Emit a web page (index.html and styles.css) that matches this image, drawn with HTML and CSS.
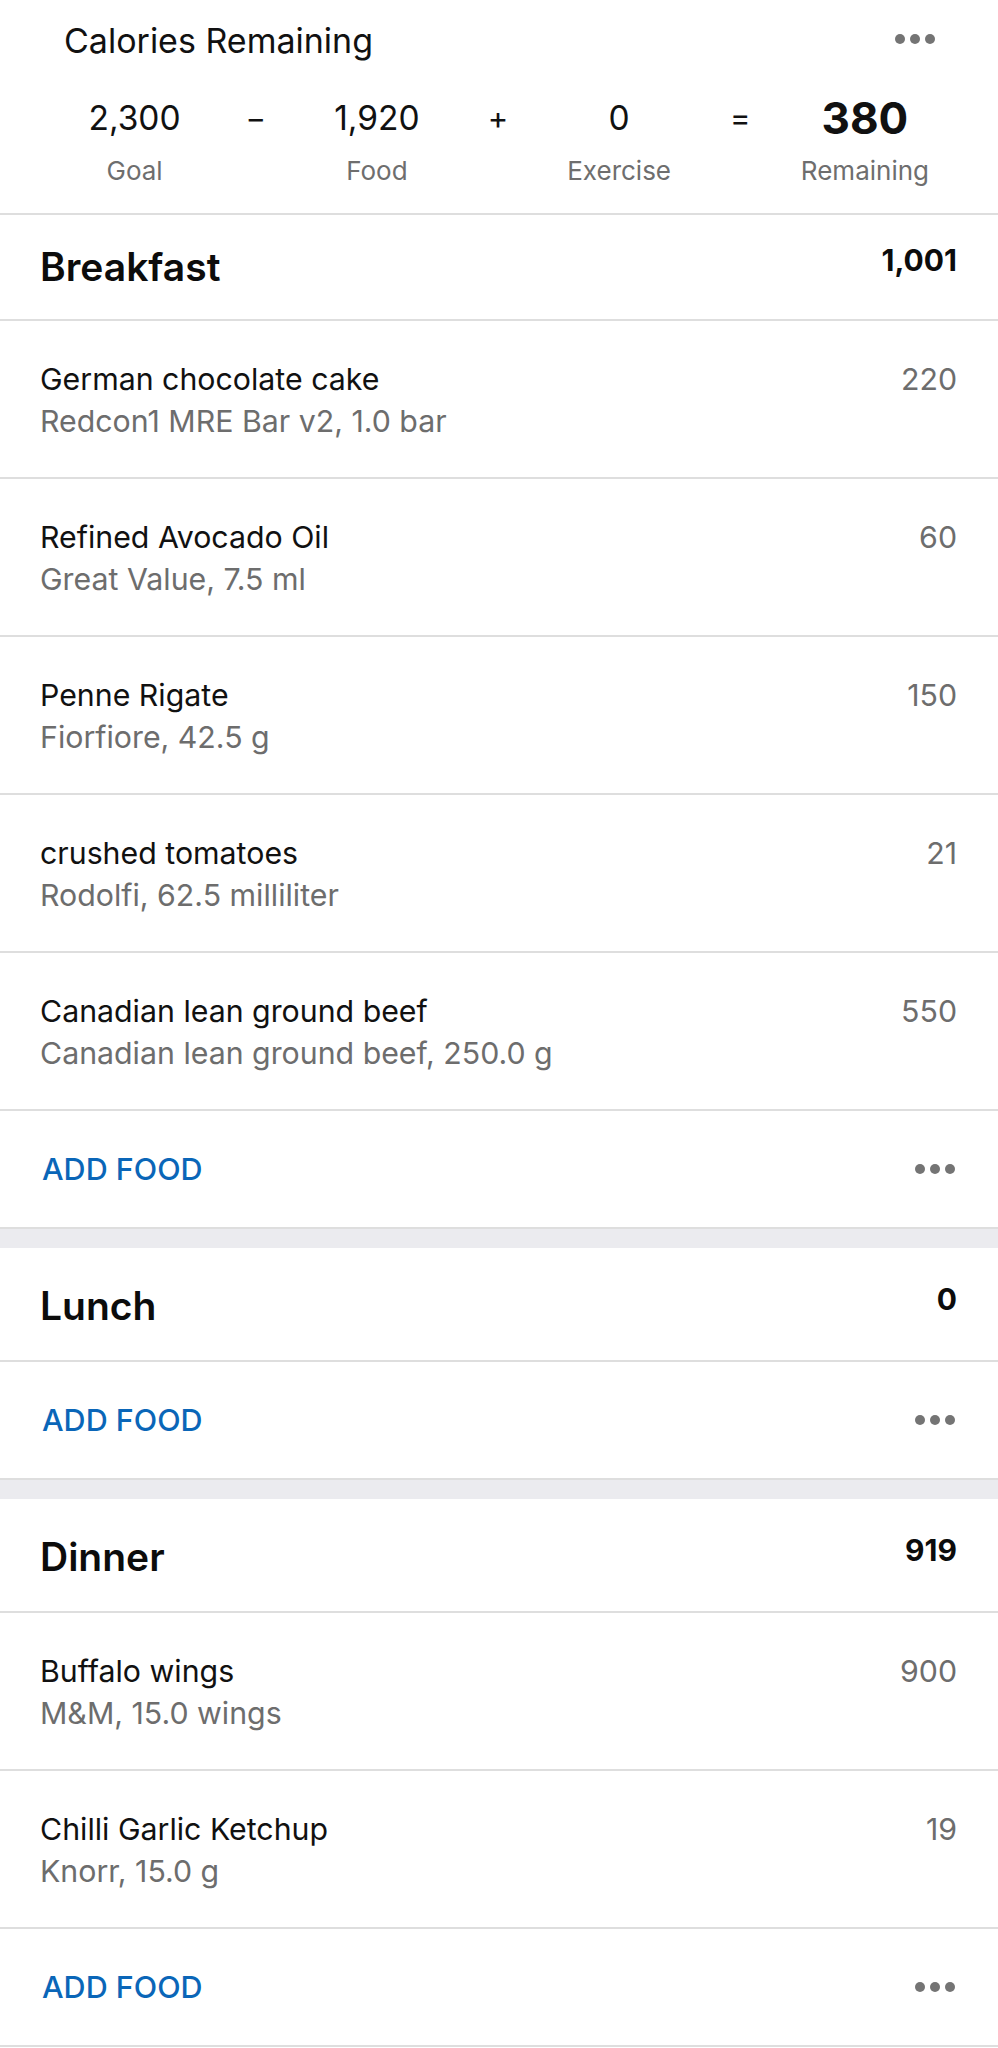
FILE: index.html
```html
<!DOCTYPE html>
<html lang="en">
<head>
<meta charset="utf-8">
<title>Diary</title>
<link rel="stylesheet" href="styles.css">
</head>
<body>
<div class="page">
  <section class="summary">
    <div class="summary-head">
      <span class="summary-title">Calories Remaining</span>
      <span class="dots"><i></i><i></i><i></i></span>
    </div>
    <div class="equation">
      <div class="eq-item"><span class="eq-value">2,300</span><span class="eq-label">Goal</span></div>
      <div class="eq-op">−</div>
      <div class="eq-item"><span class="eq-value">1,920</span><span class="eq-label">Food</span></div>
      <div class="eq-op">+</div>
      <div class="eq-item"><span class="eq-value">0</span><span class="eq-label">Exercise</span></div>
      <div class="eq-op">=</div>
      <div class="eq-item"><span class="eq-value eq-value--total">380</span><span class="eq-label">Remaining</span></div>
    </div>
  </section>

  <section class="meal">
    <div class="meal-head meal-head--first">
      <span class="meal-title">Breakfast</span>
      <span class="meal-total">1,001</span>
    </div>
    <div class="entry">
      <div class="entry-text"><div class="entry-name">German chocolate cake</div><div class="entry-desc">Redcon1 MRE Bar v2, 1.0 bar</div></div>
      <div class="entry-cal">220</div>
    </div>
    <div class="entry">
      <div class="entry-text"><div class="entry-name">Refined Avocado Oil</div><div class="entry-desc">Great Value, 7.5 ml</div></div>
      <div class="entry-cal">60</div>
    </div>
    <div class="entry">
      <div class="entry-text"><div class="entry-name">Penne Rigate</div><div class="entry-desc">Fiorfiore, 42.5 g</div></div>
      <div class="entry-cal">150</div>
    </div>
    <div class="entry">
      <div class="entry-text"><div class="entry-name">crushed tomatoes</div><div class="entry-desc">Rodolfi, 62.5 milliliter</div></div>
      <div class="entry-cal">21</div>
    </div>
    <div class="entry">
      <div class="entry-text"><div class="entry-name">Canadian lean ground beef</div><div class="entry-desc">Canadian lean ground beef, 250.0 g</div></div>
      <div class="entry-cal">550</div>
    </div>
    <div class="add-row">
      <span class="add-food">ADD FOOD</span>
      <span class="dots dots--row"><i></i><i></i><i></i></span>
    </div>
  </section>

  <div class="gap"></div>

  <section class="meal">
    <div class="meal-head">
      <span class="meal-title">Lunch</span>
      <span class="meal-total">0</span>
    </div>
    <div class="add-row">
      <span class="add-food">ADD FOOD</span>
      <span class="dots dots--row"><i></i><i></i><i></i></span>
    </div>
  </section>

  <div class="gap"></div>

  <section class="meal">
    <div class="meal-head">
      <span class="meal-title">Dinner</span>
      <span class="meal-total">919</span>
    </div>
    <div class="entry">
      <div class="entry-text"><div class="entry-name">Buffalo wings</div><div class="entry-desc">M&amp;M, 15.0 wings</div></div>
      <div class="entry-cal">900</div>
    </div>
    <div class="entry">
      <div class="entry-text"><div class="entry-name">Chilli Garlic Ketchup</div><div class="entry-desc">Knorr, 15.0 g</div></div>
      <div class="entry-cal">19</div>
    </div>
    <div class="add-row">
      <span class="add-food">ADD FOOD</span>
      <span class="dots dots--row"><i></i><i></i><i></i></span>
    </div>
  </section>
</div>
</body>
</html>
```

FILE: styles.css
```css
* { box-sizing: border-box; }

html, body {
  margin: 0;
  padding: 0;
  background: #ffffff;
}

body {
  font-family: Inter, "Noto Sans", "Liberation Sans", sans-serif;
  color: #111111;
}

.page {
  width: 998px;
}

/* ---------- summary ---------- */
.summary {
  padding: 21px 0 26px;
  border-bottom: 2px solid #dedede;
}

.summary-head {
  display: flex;
  justify-content: space-between;
  align-items: center;
  height: 40px;
  padding: 0 63px 0 64px;
}

.summary-title {
  font-size: 34px;
  line-height: 40px;
  font-weight: 400;
  color: #111;
}

.dots {
  display: inline-flex;
  gap: 5px;
  margin-top: -4px;
}

.dots i {
  display: block;
  width: 10px;
  height: 10px;
  border-radius: 50%;
  background: #747474;
}

.dots--row {
  margin-top: 0;
}

.equation {
  display: grid;
  grid-template-columns: repeat(7, 1fr);
  padding: 0 69px 0 74px;
  margin-top: 35px;
}

.eq-item {
  display: flex;
  flex-direction: column;
  align-items: center;
}

.eq-value {
  font-size: 33.5px;
  line-height: 44px;
  font-weight: 400;
  color: #111;
}

.eq-value--total {
  font-size: 44px;
  font-weight: 700;
}

.eq-label {
  margin-top: 15px;
  font-size: 26px;
  line-height: 32px;
  color: #6e6e6e;
}

.eq-op {
  text-align: center;
  font-size: 31px;
  line-height: 44px;
  color: #111;
}

/* ---------- meals ---------- */
.meal-head {
  display: flex;
  justify-content: space-between;
  align-items: center;
  height: 114px;
  padding: 4px 41px 0 40px;
  border-bottom: 2px solid #dedede;
}

.meal-head--first {
  height: 106px;
  padding-top: 0;
}

.meal-title {
  font-size: 39px;
  line-height: 44px;
  font-weight: 600;
  color: #0c0c0c;
}

.meal-total {
  font-size: 30px;
  line-height: 36px;
  font-weight: 700;
  color: #0c0c0c;
  margin-bottom: 14px;
}

.entry {
  display: flex;
  justify-content: space-between;
  align-items: flex-start;
  height: 158px;
  padding: 37px 41px 0 40px;
  border-bottom: 2px solid #dedede;
}

.entry-name {
  font-size: 30.3px;
  line-height: 42px;
  color: #111;
}

.entry-desc {
  font-size: 30.3px;
  line-height: 42px;
  color: #6d6d6d;
}

.entry-cal {
  font-size: 30.3px;
  line-height: 42px;
  color: #6d6d6d;
}

.add-row {
  display: flex;
  justify-content: space-between;
  align-items: center;
  height: 118px;
  padding: 0 43px 0 42px;
  border-bottom: 2px solid #dedede;
}

.add-food {
  font-size: 30.5px;
  line-height: 40px;
  font-weight: 500;
  color: #0a66b8;
}

.gap {
  height: 19px;
  background: #ebebef;
}
```
